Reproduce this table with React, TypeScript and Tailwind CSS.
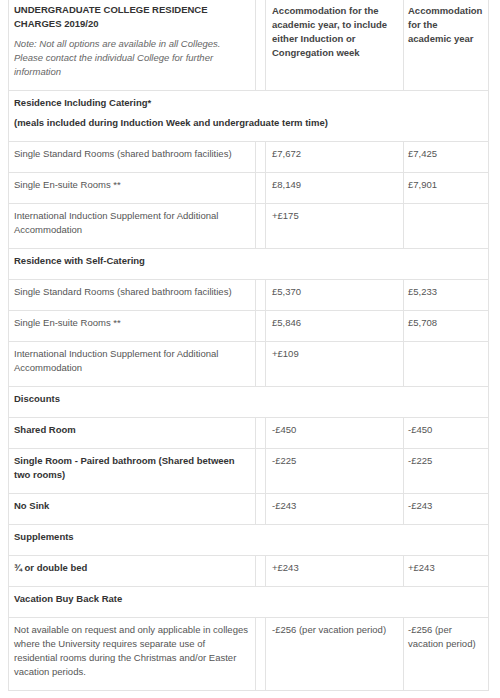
type Row =
  | { kind: 'section'; lines: string[] }
  | { kind: 'item'; label: string; bold?: boolean; a: string; b: string }

const rows: Row[] = [
  {
    kind: 'section',
    lines: ['Residence Including Catering*', '(meals included during Induction Week and undergraduate term time)'],
  },
  { kind: 'item', label: 'Single Standard Rooms (shared bathroom facilities)', a: '£7,672', b: '£7,425' },
  { kind: 'item', label: 'Single En-suite Rooms **', a: '£8,149', b: '£7,901' },
  { kind: 'item', label: 'International Induction Supplement for Additional Accommodation', a: '+£175', b: '' },
  { kind: 'section', lines: ['Residence with Self-Catering'] },
  { kind: 'item', label: 'Single Standard Rooms (shared bathroom facilities)', a: '£5,370', b: '£5,233' },
  { kind: 'item', label: 'Single En-suite Rooms **', a: '£5,846', b: '£5,708' },
  { kind: 'item', label: 'International Induction Supplement for Additional Accommodation', a: '+£109', b: '' },
  { kind: 'section', lines: ['Discounts'] },
  { kind: 'item', label: 'Shared Room', bold: true, a: '-£450', b: '-£450' },
  {
    kind: 'item',
    label: 'Single Room - Paired bathroom (Shared between two rooms)',
    bold: true,
    a: '-£225',
    b: '-£225',
  },
  { kind: 'item', label: 'No Sink', bold: true, a: '-£243', b: '-£243' },
  { kind: 'section', lines: ['Supplements'] },
  { kind: 'item', label: '¾ or double bed', bold: true, a: '+£243', b: '+£243' },
  { kind: 'section', lines: ['Vacation Buy Back Rate'] },
  {
    kind: 'item',
    label:
      'Not available on request and only applicable in colleges where the University requires separate use of residential rooms during the Christmas and/or Easter vacation periods.',
    a: '-£256 (per vacation period)',
    b: '-£256 (per vacation period)',
  },
]

const cell = 'border-x border-b border-[#e3e3e3] align-top pt-[5px] pb-[5px]'

export default function App() {
  return (
    <div className="min-h-[698px] w-[500px] bg-white font-['Liberation_Sans',Arial,sans-serif] text-[9.5px] leading-[14px] text-[#555]">
      <table className="ml-2 w-[480px] table-fixed border-collapse">
        <colgroup>
          <col className="w-[247px]" />
          <col className="w-[10px]" />
          <col className="w-[138px]" />
          <col className="w-[85px]" />
        </colgroup>
        <tbody>
          <tr>
            <td className="border-x border-b border-[#e3e3e3] align-top pl-[5px] pr-2 pt-[3px] pb-[5px]">
              <p className="mb-[6px] font-bold text-[#333]">UNDERGRADUATE COLLEGE RESIDENCE CHARGES 2019/20</p>
              <p className="mb-[6px] italic text-[#666]">
                Note: Not all options are available in all Colleges. Please contact the individual College for further
                information
              </p>
            </td>
            <td className="border-x border-b border-[#e3e3e3]" />
            <td className="border-x border-b border-[#e3e3e3] align-top pl-[6px] pr-1 pt-[4px] font-bold text-[#444]">
              Accommodation for the academic year, to include either Induction or Congregation week
            </td>
            <td className="border-x border-b border-[#e3e3e3] align-top pl-[4px] pr-0 pt-[4px] font-bold text-[#444]">
              Accommodation
              <br />
              for the
              <br />
              academic year
            </td>
          </tr>
          {rows.map((r, i) =>
            r.kind === 'section' ? (
              <tr key={i}>
                <td colSpan={4} className={`${cell} pl-[5px] font-bold text-[#333]`}>
                  {r.lines.map((l) => (
                    <p key={l} className="mb-[6px]">
                      {l}
                    </p>
                  ))}
                </td>
              </tr>
            ) : (
              <tr key={i}>
                <td className={`${cell} pl-[5px] pr-1 ${r.bold ? 'font-bold text-[#333]' : ''}`}>
                  <p className="mb-[6px]">{r.label}</p>
                </td>
                <td className={cell} />
                <td className={`${cell} pl-[6px] pr-1`}>
                  <p className="mb-[6px]">{r.a}</p>
                </td>
                <td className={`${cell} pl-[4px] pr-[2px]`}>
                  <p className="mb-[6px]">{r.b}</p>
                </td>
              </tr>
            ),
          )}
        </tbody>
      </table>
    </div>
  )
}
